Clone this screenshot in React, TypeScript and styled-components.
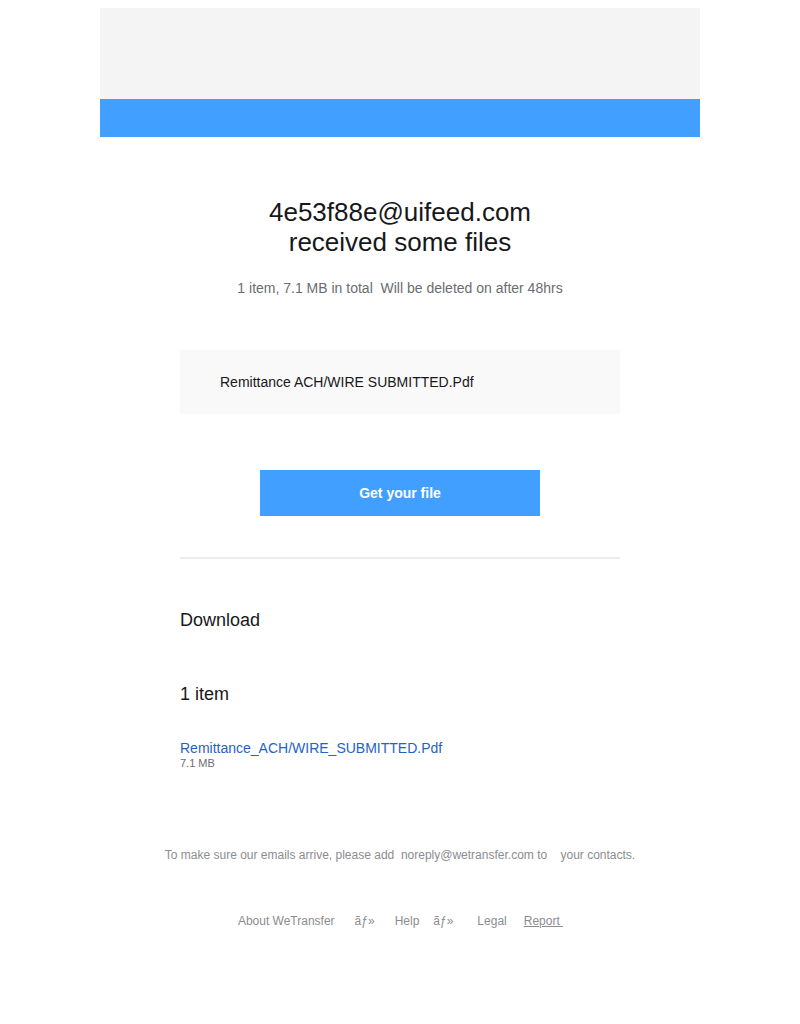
import styled, { createGlobalStyle } from "styled-components";

const Global = createGlobalStyle`
  body {
    margin: 8px;
    background: #ffffff;
    font-family: "Liberation Sans", Arial, sans-serif;
  }
`;

const Wrapper = styled.div`
  width: 600px;
  margin: 0 auto;
`;

const Banner = styled.div`
  height: 91px;
  background: #f4f4f4;
`;

const BlueBar = styled.div`
  height: 38px;
  background: #409fff;
`;

const Content = styled.div`
  padding: 60px 80px 0;
  display: flex;
  flex-direction: column;
`;

const Headline = styled.h1`
  margin: 0;
  font-size: 26px;
  line-height: 30px;
  font-weight: 400;
  color: #17181a;
  text-align: center;
`;

const Summary = styled.p`
  margin: 21px 0 0;
  font-size: 14px;
  line-height: 20px;
  color: #6a6d70;
  text-align: center;
  white-space: pre;
`;

const FileBox = styled.div`
  margin-top: 52px;
  height: 64px;
  background: #f9f9f9;
  display: flex;
  align-items: center;
  padding-left: 40px;
  font-size: 14px;
  color: #17181a;
`;

const Button = styled.a`
  margin: 56px auto 0;
  width: 280px;
  height: 46px;
  background: #409fff;
  color: #ffffff;
  font-size: 14px;
  font-weight: 700;
  display: flex;
  align-items: center;
  justify-content: center;
  text-decoration: none;
`;

const Divider = styled.hr`
  margin: 41px 0 0;
  border: 0;
  border-top: 2px solid #ececec;
`;

const SectionTitle = styled.h2<{ $gap: number }>`
  margin: ${(p) => p.$gap}px 0 0;
  font-size: 18px;
  line-height: 24px;
  font-weight: 400;
  color: #17181a;
`;

const FileLink = styled.a`
  margin-top: 33px;
  font-size: 14px;
  line-height: 18px;
  color: #1f63c6;
  text-decoration: none;
`;

const FileSize = styled.span`
  font-size: 11px;
  line-height: 13px;
  color: #6a6d70;
`;

const Notice = styled.p`
  margin: 77px -40px 0;
  font-size: 12px;
  line-height: 16px;
  color: #8a8d90;
  text-align: center;
  white-space: pre;
`;

const Links = styled.div`
  margin-top: 50px;
  display: flex;
  justify-content: center;
  font-size: 12px;
  line-height: 16px;
  color: #8a8d90;
`;

const LinkItem = styled.span<{ $left: number; $underline?: boolean }>`
  margin-left: ${(p) => p.$left}px;
  text-decoration: ${(p) => (p.$underline ? "underline" : "none")};
  white-space: pre;
`;

export default function App() {
  return (
    <>
      <Global />
      <Wrapper>
        <Banner />
        <BlueBar />
        <Content>
          <Headline>
            4e53f88e@uifeed.com
            <br />
            received some files
          </Headline>
          <Summary>1 item, 7.1 MB in total  Will be deleted on after 48hrs</Summary>
          <FileBox>Remittance ACH/WIRE SUBMITTED.Pdf</FileBox>
          <Button href="#">Get your file</Button>
          <Divider />
          <SectionTitle $gap={49}>Download</SectionTitle>
          <SectionTitle $gap={50}>1 item</SectionTitle>
          <FileLink href="#">Remittance_ACH/WIRE_SUBMITTED.Pdf</FileLink>
          <FileSize>7.1 MB</FileSize>
          <Notice>To make sure our emails arrive, please add  noreply@wetransfer.com to    your contacts.</Notice>
          <Links>
            <LinkItem $left={1}>About WeTransfer</LinkItem>
            <LinkItem $left={20}>ãƒ»</LinkItem>
            <LinkItem $left={20}>Help</LinkItem>
            <LinkItem $left={14}>ãƒ»</LinkItem>
            <LinkItem $left={24}>Legal</LinkItem>
            <LinkItem $left={17} $underline>Report </LinkItem>
          </Links>
        </Content>
      </Wrapper>
    </>
  );
}
